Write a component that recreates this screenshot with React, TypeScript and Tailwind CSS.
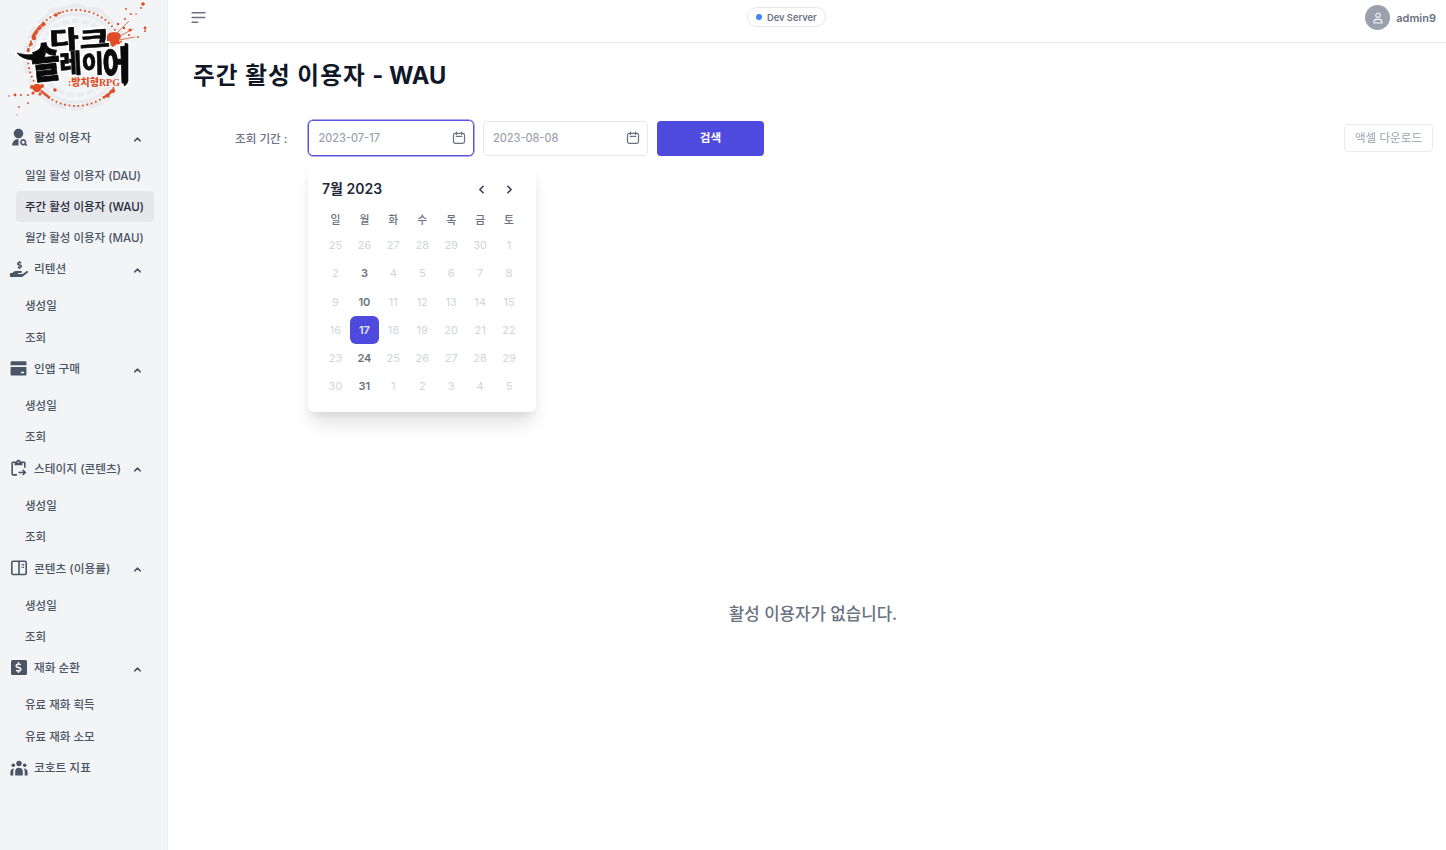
import type { ReactNode } from "react";
import { RiUserSearchFill, RiBankCardFill } from "react-icons/ri";
import { FaDollarSign, FaHandHoldingUsd } from "react-icons/fa";
import { MdOutlineContentPasteGo } from "react-icons/md";
import { ChevronLeft, ChevronRight, ChevronUp } from "lucide-react";

function SplitPanelIcon() {
  return (
    <svg viewBox="0 0 18 18" className="size-[18px]" fill="none" stroke="currentColor" strokeWidth="1.6">
      <rect x="1.8" y="2.3" width="14.4" height="13.2" rx="1.2" />
      <path d="M9 2.3v13.2" />
      <path d="M11.5 5.8h2.6M11.5 8.4h2.6" strokeWidth="1.4" strokeDasharray="1.1 0.4" />
    </svg>
  );
}

function PeopleIcon() {
  return (
    <svg viewBox="0 0 18 18" className="size-[18px]" fill="currentColor">
      <circle cx="9" cy="4.4" r="2.7" />
      <circle cx="3.3" cy="6.2" r="1.8" />
      <circle cx="14.7" cy="6.2" r="1.8" />
      <path d="M5.2 16.5v-4a3.8 3.8 0 0 1 7.6 0v4z" />
      <path d="M.4 16.5v-3.3c0-2.3 1.3-3.8 3.6-3.8-.4.9-.7 1.8-.7 2.9v4.2zM17.6 16.5v-3.3c0-2.3-1.3-3.8-3.6-3.8.4.9.7 1.8.7 2.9v4.2z" />
    </svg>
  );
}

function CalendarIcon() {
  return (
    <svg viewBox="0 0 14 14" className="size-[14px] text-gray-500" fill="none" stroke="currentColor" strokeWidth="1.25" strokeLinecap="round">
      <rect x="1.5" y="2.4" width="11" height="9.9" rx="1.8" />
      <path d="M4.4 1v2.4M9.6 1v2.4M4.2 5.3h5.6" />
    </svg>
  );
}

function AvatarIcon() {
  return (
    <svg viewBox="0 0 12 12" className="size-[12px]" fill="none" stroke="currentColor" strokeWidth="1.15" strokeLinejoin="round">
      <circle cx="6" cy="3.2" r="2.2" />
      <path d="M2 11V9.9a2.6 2.6 0 0 1 2.6-2.6h2.8A2.6 2.6 0 0 1 10 9.9V11z" />
    </svg>
  );
}

type Group = { label: string; icon: ReactNode; items: string[] };

const groups: Group[] = [
  {
    label: "활성 이용자",
    icon: <RiUserSearchFill size={19} />,
    items: ["일일 활성 이용자 (DAU)", "주간 활성 이용자 (WAU)", "월간 활성 이용자 (MAU)"],
  },
  { label: "리텐션", icon: <FaHandHoldingUsd size={18} />, items: ["생성일", "조회"] },
  { label: "인앱 구매", icon: <RiBankCardFill size={19} />, items: ["생성일", "조회"] },
  { label: "스테이지 (콘텐츠)", icon: <MdOutlineContentPasteGo size={19} />, items: ["생성일", "조회"] },
  { label: "콘텐츠 (이용률)", icon: <SplitPanelIcon />, items: ["생성일", "조회"] },
  {
    label: "재화 순환",
    icon: (
      <span className="flex h-[15px] w-[16px] items-center justify-center rounded-[1.5px] bg-gray-600 text-gray-100">
        <FaDollarSign size={11} />
      </span>
    ),
    items: ["유료 재화 획득", "유료 재화 소모"],
  },
  { label: "코호트 지표", icon: <PeopleIcon />, items: [] },
];

const active = "주간 활성 이용자 (WAU)";

const logoGlyphs = [
  { ch: "다", t: "translate(50 49.5) rotate(-3) scale(1.22 .95)" },
  { ch: "크", t: "translate(80 48.5) rotate(-4) scale(1.26 .88)" },
  { ch: "슬", t: "translate(33 79) rotate(-6) scale(1.2 1.6)" },
  { ch: "레", t: "translate(60 73.5) rotate(-3) scale(.92 1)" },
  { ch: "이", t: "translate(82 73) rotate(-2) scale(.92 .95)" },
  { ch: "어", t: "translate(103 80) rotate(-2) scale(1.08 1.5)" },
];

const splashes = [
  [143, 4, 1.8], [141, 8, 1], [126, 9, 1], [131, 14, 1], [125, 19, 1], [145, 28, 1.4], [145, 31, 1],
  [136, 14, 0.8], [118, 24, 1.2], [124, 28, 1.2], [130, 30, 1.6], [129, 35, 1.1], [138, 37, 0.9],
  [56, 15, 1.8], [60, 13, 1.1], [34, 38, 2.2], [31, 44, 1.8], [28, 52, 1.3],
  [37, 88, 4.3], [32, 87, 2], [42, 86, 2], [33, 93, 1.6], [40, 94, 1.5], [55, 90, 1.8],
  [15, 95, 1.4], [21, 95, 1.1], [9, 96, 0.8], [28, 95, 1], [28, 103, 0.9], [19, 107, 0.9], [17, 115, 0.6],
  [113, 91, 2], [108, 96, 1.6],
];

function Logo() {
  return (
    <svg viewBox="0 0 167 122" className="h-[122px] w-[167px] shrink-0">
      <g fill="none" stroke="#e9ebee">
        <circle cx="76" cy="58" r="44" strokeWidth="3" />
        <circle cx="76" cy="58" r="37" strokeWidth="4" strokeDasharray="7 3" />
        <circle cx="76" cy="58" r="51" strokeWidth="4" strokeDasharray="13 5" />
        <path d="M45 18q8-14 18-7q12-13 25 0q12-7 18 7M46 99q10 12 21 4q10 9 20 0q12 7 20-6" strokeWidth="3" />
      </g>
      <g fill="none" stroke="#db552e">
        <circle cx="76" cy="58" r="48" strokeWidth="1.9" strokeDasharray="1.8 2.7" />
        <path d="M33 37Q38 28 45 23" strokeWidth="3.6" strokeDasharray="8 1 4 1" />
        <path d="M28.5 48q-1 6-.5 12M41 91l9 7M103 98q7-4 11-9" strokeWidth="2.4" />
        <path d="M113 37L129 21M116 38l17-9M119 40l16-3" strokeWidth="0.8" />
      </g>
      <g fill="#df4c25">
        {splashes.map(([x, y, r], i) => (
          <circle key={i} cx={x} cy={y} r={r} />
        ))}
        <path d="M105 38l4-5 5-1 5 1 2 3-2 4 2 6-4-2-4 3-4-3z" />
      </g>
      <g
        fontFamily="'Noto Sans CJK KR', sans-serif"
        fontWeight="900"
        fontSize="26"
        fill="#0a0a0a"
        stroke="#0a0a0a"
        strokeWidth="0.6"
        strokeLinejoin="round"
        className="[filter:drop-shadow(1.5px_0_0_#fff)_drop-shadow(-1.5px_0_0_#fff)_drop-shadow(0_1.5px_0_#fff)_drop-shadow(0_-1.5px_0_#fff)]"
      >
        <path d="M17 53q9 3 20 1l9-3-2 8q-16 3-24-3z" />
        {logoGlyphs.map((g) => (
          <text key={g.ch} transform={g.t}>
            {g.ch}
          </text>
        ))}
        <path d="M125 43l3 1v37q-1 4-4 5z" />
      </g>
      <text
        x="68"
        y="86"
        fontFamily="'Liberation Serif', 'Noto Sans CJK KR', serif"
        fontWeight="900"
        fontSize="10.5"
        fill="#df4c25"
        stroke="#f8f8f9"
        strokeWidth="2"
        paintOrder="stroke"
        textLength="52"
        lengthAdjust="spacingAndGlyphs"
      >
        :방치형RPG
      </text>
    </svg>
  );
}

function Sidebar() {
  return (
    <aside className="flex w-[168px] shrink-0 flex-col border-r border-[#eceef1] bg-gray-100 font-medium text-gray-600">
      <Logo />
      <nav className="pt-[0.4px]">
        {groups.map((g) => (
          <div key={g.label}>
            <div className={g.items.length ? "mb-[6.2px] flex h-[31.2px] items-center pl-[9px]" : "flex h-[31.2px] items-center pl-[9px]"}>
              <span className="flex w-[19px] justify-center">{g.icon}</span>
              <span className="ml-[6px] w-[98px] pt-[2px] text-[11.7px] whitespace-nowrap">{g.label}</span>
              {g.items.length > 0 && <ChevronUp className="mt-[3px] size-[11px]" strokeWidth={3.2} />}
            </div>
            {g.items.map((item) => (
              <div
                key={item}
                className={
                  item === active
                    ? "ml-[15.5px] flex h-[31.2px] w-[138.5px] items-center rounded bg-gray-200 pt-[1.4px] pl-[9.5px] text-[11.5px] whitespace-nowrap text-gray-800"
                    : "ml-[15.5px] flex h-[31.2px] w-[138.5px] items-center rounded pt-[1.4px] pl-[9.5px] text-[11.5px] whitespace-nowrap"
                }
              >
                {item}
              </div>
            ))}
          </div>
        ))}
      </nav>
    </aside>
  );
}

function DateField({ value, focused, children }: { value: string; focused?: boolean; children?: ReactNode }) {
  return (
    <div className="relative">
      <div
        className={
          focused
            ? "flex h-[36px] w-[166px] items-center justify-between rounded-[5px] border-[1.5px] border-[#5a54e2] pr-[7px] pl-[9.5px] ring-[0.5px] ring-[#5a54e2]"
            : "flex h-[35px] w-[165px] items-center justify-between rounded-[5px] border border-gray-200 pr-[7px] pl-[9px]"
        }
      >
        <span className="pt-px text-[11.1px] text-gray-400 [-webkit-text-stroke:0.15px_#8f95a0]">{value}</span>
        <CalendarIcon />
      </div>
      {children}
    </div>
  );
}

const dayNames = ["일", "월", "화", "수", "목", "금", "토"];
const weeks = [
  [25, 26, 27, 28, 29, 30, 1],
  [2, 3, 4, 5, 6, 7, 8],
  [9, 10, 11, 12, 13, 14, 15],
  [16, 17, 18, 19, 20, 21, 22],
  [23, 24, 25, 26, 27, 28, 29],
  [30, 31, 1, 2, 3, 4, 5],
];

function dayClass(week: number, col: number) {
  if (week === 3 && col === 1) return "flex items-center justify-center rounded-md bg-[#4f4ade] font-semibold text-indigo-100";
  if (week > 0 && col === 1) return "flex items-center justify-center font-semibold text-gray-500";
  return "flex items-center justify-center text-gray-300";
}

function Calendar() {
  return (
    <div className="absolute top-[43px] left-0 h-[249px] w-[228px] rounded-md bg-white pr-[12.5px] pl-[13px] shadow-[0_15px_19px_-4px_rgba(0,0,0,0.12),0_5px_9px_-3px_rgba(0,0,0,0.08)]">
      <div className="flex h-[51px] items-center justify-between pr-[7.5px] pl-[1px] text-gray-800">
        <span className="text-[14px] font-semibold">7월 2023</span>
        <span className="flex gap-[15px] pt-px text-gray-700">
          <ChevronLeft className="size-[13px]" strokeWidth={3} />
          <ChevronRight className="size-[13px]" strokeWidth={3} />
        </span>
      </div>
      <div className="grid h-[17.8px] grid-cols-7 text-center text-[10.8px] leading-[14px] font-medium text-gray-500">
        {dayNames.map((d) => (
          <span key={d}>{d}</span>
        ))}
      </div>
      <div className="grid auto-rows-[28.1px] grid-cols-7 text-[11px]">
        {weeks.map((w, i) =>
          w.map((d, j) => (
            <span key={`${i}-${j}`} className={dayClass(i, j)}>
              {d}
            </span>
          )),
        )}
      </div>
    </div>
  );
}

export default function App() {
  return (
    <div className="flex h-[850px] overflow-hidden bg-white font-['Inter','Noto_Sans_CJK_KR',sans-serif] text-[11.6px] leading-[15px]">
      <Sidebar />
      <div className="flex min-w-0 flex-1 flex-col">
        <header className="flex h-[43px] shrink-0 justify-between border-b border-gray-200 pr-[10px] pl-[21px]">
          <svg viewBox="0 0 24 24" className="mt-[8px] size-[19px] text-gray-500" fill="none" stroke="currentColor" strokeWidth="2" strokeLinecap="round">
            <path d="M4 6h16M4 12h16M4 18h7" />
          </svg>
          <div className="mt-[7px] -ml-px flex h-[20px] items-center gap-[5px] rounded-full border border-gray-200 px-[8px] text-[9.3px] font-semibold text-gray-500">
            <span className="size-[6.5px] rounded-full bg-[#4285f4]" />
            Dev Server
          </div>
          <div className="mt-[5px] flex h-[25px] items-center gap-[6px] text-[11px] font-semibold text-gray-500">
            <span className="flex size-[25px] items-center justify-center rounded-full bg-gray-400 text-gray-100">
              <AvatarIcon />
            </span>
            <span className="pt-px">admin9</span>
          </div>
        </header>
        <main className="flex flex-1 flex-col pr-[13px] pl-[25px]">
          <h1 className="mt-[18px] text-[23.6px] leading-[30px] font-bold text-gray-900">
            <span className="tracking-[0.045em]">주간 활성 이용자 </span>- WAU
          </h1>
          <div className="mt-[29px] flex h-[36px] items-center">
            <span className="ml-[42px] w-[73px] pt-[2px] font-medium text-gray-500">조회 기간 :</span>
            <DateField value="2023-07-17" focused>
              <Calendar />
            </DateField>
            <span className="w-[9px]" />
            <DateField value="2023-08-08" />
            <button className="ml-[9px] h-[35px] w-[107px] rounded bg-[#4f4ade] font-semibold text-white">검색</button>
            <button className="ml-auto h-[28px] w-[89px] rounded border border-gray-200 pt-px font-medium text-gray-400 opacity-80">
              액셀 다운로드
            </button>
          </div>
          <p className="mt-[446px] text-center text-[16.8px] leading-[24px] font-medium text-gray-500">
            활성 이용자가 없습니다.
          </p>
        </main>
      </div>
    </div>
  );
}
